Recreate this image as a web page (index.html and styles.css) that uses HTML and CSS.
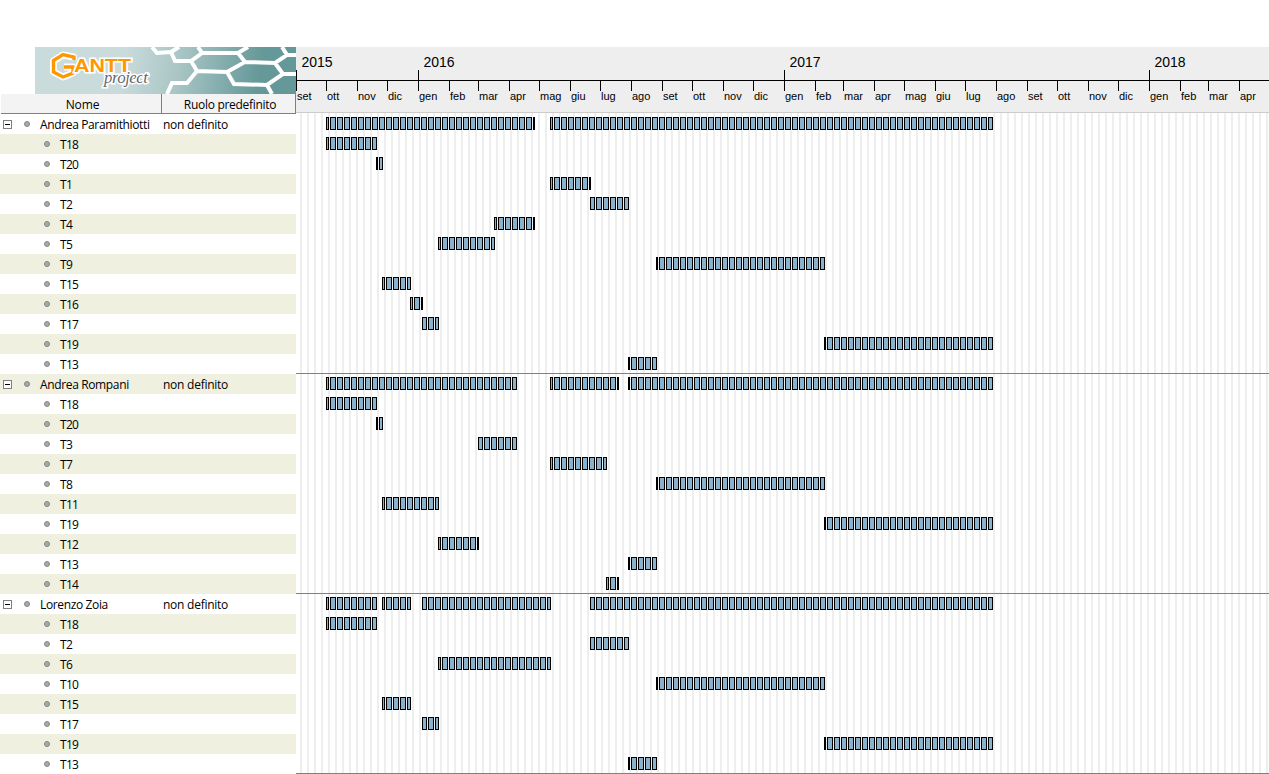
FILE: index.html
```html
<!DOCTYPE html>
<html lang="it">
<head>
<meta charset="utf-8">
<title>GanttProject</title>
<link rel="stylesheet" href="styles.css">
</head>
<body>
<main class="app">
  <section class="side">
    <div class="logo">
      <svg width="261" height="47" viewBox="0 0 261 47">
        <defs>
          <linearGradient id="cell" gradientUnits="userSpaceOnUse" x1="90" y1="10" x2="225" y2="30"><stop offset="0" stop-color="#c9dbdb"/><stop offset=".4" stop-color="#a9c5c5"/><stop offset="1" stop-color="#659898"/></linearGradient>
        </defs>
        <rect width="261" height="47" fill="url(#cell)"/>
        <g fill="none" stroke="#fff" stroke-width="4">
          <path d="M117 0L122 6L136 5L144 0M136 5L140 14L156 14L167 6L163 0M167 6L203 6L213 0M203 6L210 15L192 25L162 24L156 14M210 15L240 16L252 8L247 0M252 8H261M162 24L152 36H137L132 47M192 25L199 37L232 38L248 27L240 16M248 27H261M232 38L237 47"/>
        </g>
        <path d="M38.500 13V10L28 8L18.500 14V25L28 30L38 26V20H29" fill="none" stroke="#fff" stroke-width="7" stroke-linejoin="round"/>
        <path d="M39 13V10L28 7.500L18.500 13.500V25L28 30L38 26V20H29" fill="none" stroke="#ff9800" stroke-width="3.400"/>
        <text class="word" x="39" y="25" textLength="57" lengthAdjust="spacingAndGlyphs">ANTT</text>
        <text class="script" x="69" y="36" textLength="44">project</text>
      </svg>
    </div>
    <div class="cols"><div class="col name">Nome</div><div class="col role">Ruolo predefinito</div></div>
    <div id="tree"></div>
  </section>
  <section class="chart">
    <div class="scale"><div class="years" id="years"></div><div class="months" id="months"></div></div>
    <div class="grid" id="grid"></div>
  </section>
</main>
<script src="chart.js"></script>
</body>
</html>
```
FILE: styles.css
```css
* { box-sizing: border-box; }
body { margin: 0; background: #fff; color: #000; overflow: hidden; }
.app { display: flex; width: 1269px; height: 774px; padding-top: 47px; font: 12px/20px "Open Sans", "Noto Sans", sans-serif; }
.side { width: 296px; flex: none; }
.logo { height: 47px; padding-left: 35px; }
.logo svg { display: block; }
.word { font: bold 18px "Liberation Sans", sans-serif; fill: #ff9800; stroke: #fff; stroke-width: 3px; paint-order: stroke; }
.script { font: italic 17px "Liberation Serif", serif; fill: #666; stroke: #fff; stroke-width: 3px; paint-order: stroke; }
.cols { display: flex; height: 20px; padding-left: 1px; }
.col { height: 20px; background: #f3f3f3; border-right: 1px solid #808080; border-bottom: 1px solid #808080; text-align: center; padding: 1px 0 0 3px; letter-spacing: -.3px; }
.name { width: 161px; letter-spacing: -.1px; }
.role { width: 134px; }
.row { display: flex; align-items: center; height: 20px; white-space: nowrap; }
.row.odd { background: #eff0e0; }
.box { width: 9px; height: 9px; margin-left: 3px; border: 1px solid #808080; background: linear-gradient(#000, #000) center / 5px 1px no-repeat #fff; }
.dot { width: 6px; height: 6px; margin-left: 12px; border-radius: 50%; border: 1px solid #858585; background: #aaa; }
.task .dot { margin-left: 44px; }
.label { margin-left: 10px; width: 123px; padding-top: 2px; letter-spacing: -.36px; }
.task .label { letter-spacing: -.7px; }
.rolename { padding-top: 2px; letter-spacing: -.25px; }
.chart { flex: 1; min-width: 0; overflow: hidden; }
.scale { height: 66px; background: #eee; border-bottom: 1px solid #ccc; font-family: "Liberation Sans", sans-serif; }
.years { display: flex; height: 34px; border-bottom: 1px solid #000; font-size: 14px; line-height: 30px; }
.year { flex: none; padding-left: 5.5px; background: linear-gradient(#000, #000) left bottom / 1px 10px no-repeat; }
.months { display: flex; font-size: 11px; line-height: 31px; }
.month { flex: none; height: 31px; padding-left: 1px; background: linear-gradient(#000, #000) left top / 1px 10px no-repeat; }
.grid { height: 661px; padding-top: 1px; background: repeating-linear-gradient(90deg, #fff 0 4px, #eee 4px 6px, #fff 6px 7px); }
.lane { display: flex; height: 20px; padding-top: 3px; }
.lane.last { border-bottom: 1px solid #808080; }
.cell { flex: none; height: 13px; background: #8bb2cc; border: 1px solid #000; }
```
FILE: chart.js
```js
const origin = 296;
const people = [
  ['Andrea Paramithiotti', [[326,535],[550,993]], [
    ['T18',326,377],['T20',376,383],['T1',550,591],['T2',590,629],['T4',494,535],['T5',438,495],['T9',656,825],
    ['T15',382,411],['T16',410,423],['T17',422,439],['T19',824,993],['T13',628,657]]],
  ['Andrea Rompani', [[326,517],[550,619],[628,993]], [
    ['T18',326,377],['T20',376,383],['T3',478,517],['T7',550,607],['T8',656,825],['T11',382,439],['T19',824,993],
    ['T12',438,479],['T13',628,657],['T14',606,619]]],
  ['Lorenzo Zoia', [[326,377],[382,411],[422,551],[590,993]], [
    ['T18',326,377],['T2',590,629],['T6',438,551],['T10',656,825],['T15',382,411],['T17',422,439],['T19',824,993],['T13',628,657]]]
];
const monthStarts = [296,326,357,387,418,449,478,509,539,570,600,631,662,692,723,753,784,815,843,874,904,935,965,996,1027,1057,1088,1118,1149,1180,1208,1239,1269];
const monthNames = ['gen','feb','mar','apr','mag','giu','lug','ago','set','ott','nov','dic'];
const yearStarts = [[2015,296,418],[2016,418,784],[2017,784,1149],[2018,1149,1269]];

document.getElementById('years').innerHTML = yearStarts
  .map(([y, a, b]) => `<div class="year" style="width:${b - a}px">${y}</div>`).join('');
document.getElementById('months').innerHTML = monthStarts.slice(0, -1)
  .map((x, i) => `<div class="month" style="width:${monthStarts[i + 1] - x}px">${monthNames[(i + 8) % 12]}</div>`).join('');

// A bar is split into weekly cells, six pixels wide with a one pixel gap.
function cells(segments) {
  let cursor = origin, html = '';
  for (const [start, end] of segments) {
    for (let week = 330 + Math.floor((start - 330) / 7) * 7; week < end; week += 7) {
      const a = Math.max(start, week), b = Math.min(end, week + 6);
      if (b <= a) continue;
      html += `<i class="cell" style="margin-left:${a - cursor}px;width:${b - a}px"></i>`;
      cursor = b;
    }
  }
  return html;
}

let tree = '', grid = '', n = 0;
for (const [name, load, tasks] of people) {
  tree += `<div class="row ${n++ % 2 ? 'odd' : ''}"><i class="box"></i><i class="dot"></i><span class="label">${name}</span><span class="rolename">non definito</span></div>`;
  grid += `<div class="lane">${cells(load)}</div>`;
  tasks.forEach(([id, a, b], i) => {
    tree += `<div class="row task ${n++ % 2 ? 'odd' : ''}"><i class="dot"></i><span class="label">${id}</span></div>`;
    grid += `<div class="lane ${i === tasks.length - 1 ? 'last' : ''}">${cells([[a, b]])}</div>`;
  });
}
document.getElementById('tree').innerHTML = tree;
document.getElementById('grid').innerHTML = grid;
```
